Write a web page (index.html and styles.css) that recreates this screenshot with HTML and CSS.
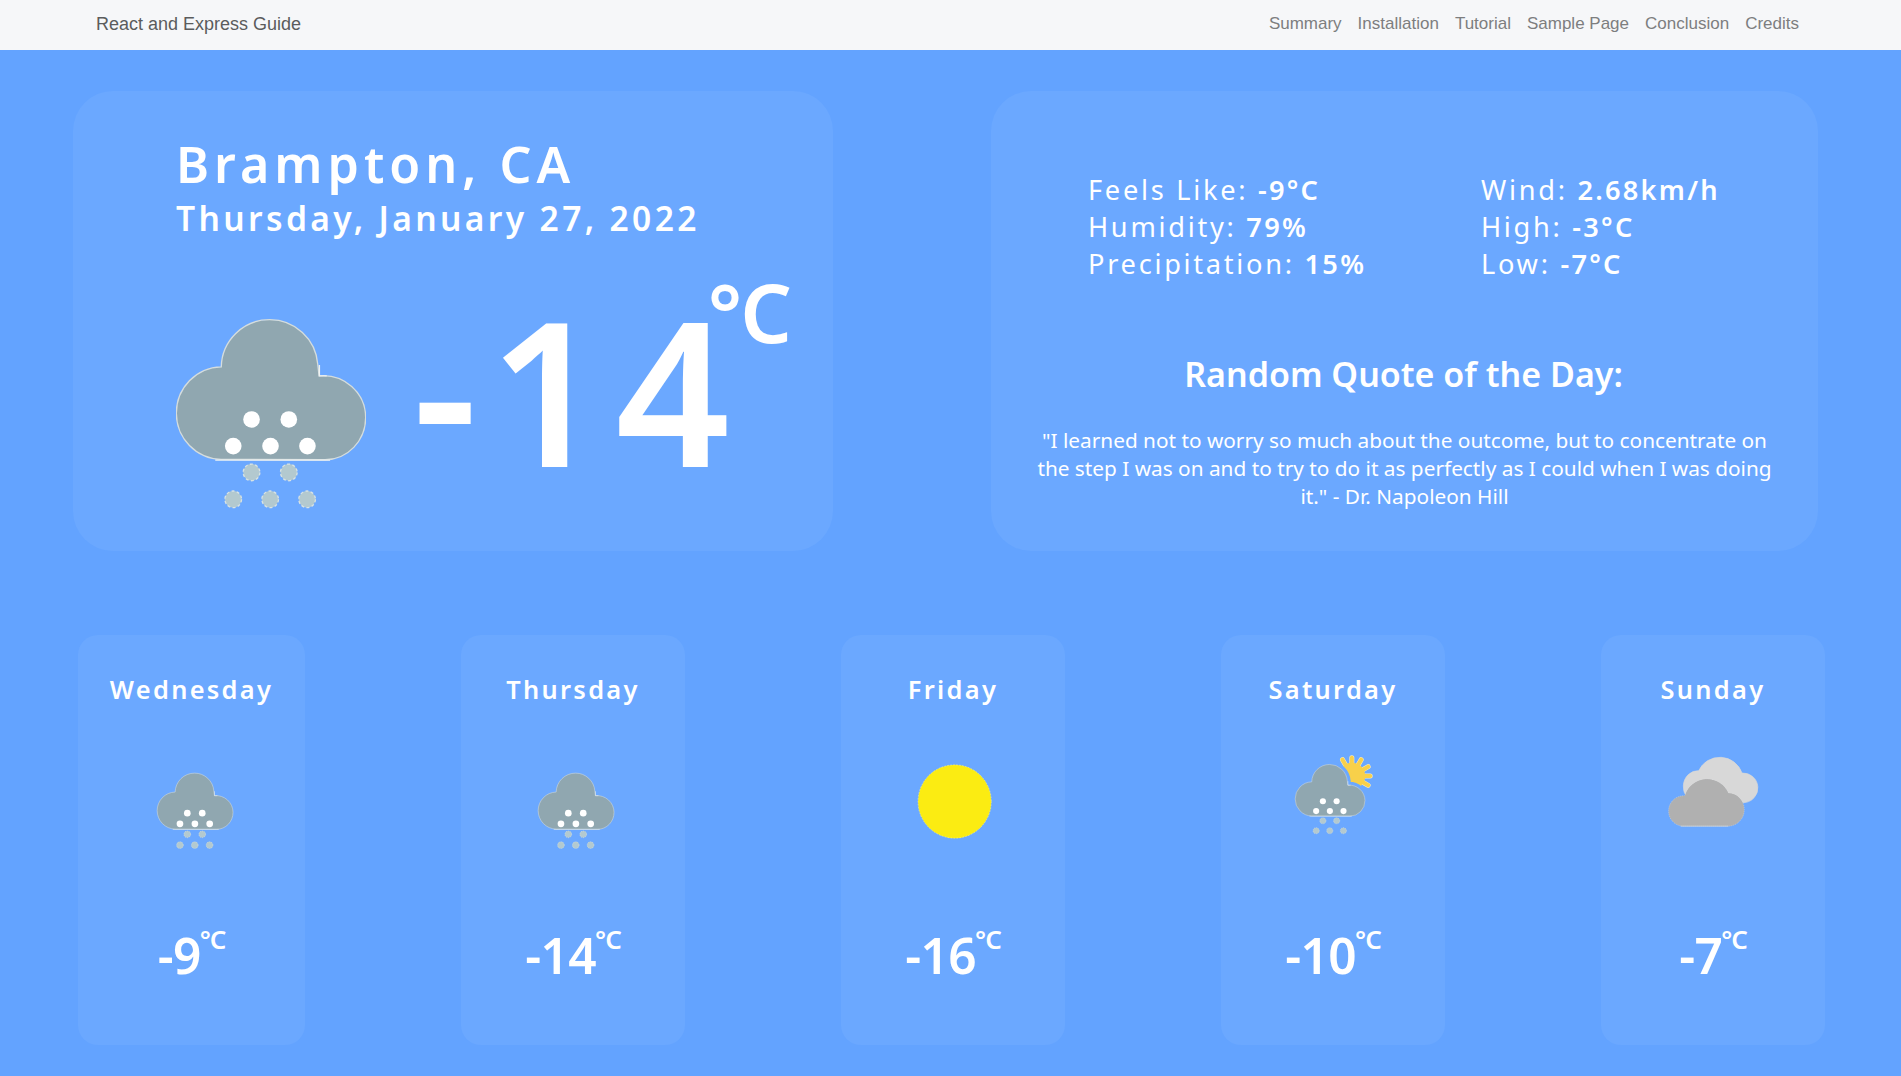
FILE: index.html
```html
<!DOCTYPE html>
<html lang="en">
<head>
<meta charset="utf-8">
<title>React and Express Guide</title>
<link rel="stylesheet" href="styles.css">
</head>
<body>
<svg class="defs" aria-hidden="true">
  <defs>
    <path id="cloud" d="M213 508A138 139 0 0 1 78 369A138 139 0 0 1 213 230A145 145 0 0 1 358 88A145 145 0 0 1 503 222L507 257A128 126 0 0 1 647 382A122 127 0 0 1 525 509Z"/>
    <g id="snow">
      <g fill="#fff"><circle cx="304" cy="388" r="25"/><circle cx="416" cy="388" r="25"/><circle cx="249" cy="468" r="25"/><circle cx="361" cy="468" r="25"/><circle cx="472" cy="468" r="25"/></g>
      <g fill="#b3c9cf" stroke="#d9e3e3" stroke-width="4" stroke-dasharray="9 7"><circle cx="304" cy="547" r="25"/><circle cx="416" cy="547" r="25"/><circle cx="249" cy="628" r="25"/><circle cx="360" cy="628" r="25"/><circle cx="471" cy="628" r="25"/></g>
    </g>
    <g id="snow-cloud">
      <use href="#cloud" fill="#90a7b0" stroke="#d5dddd" stroke-width="4"/>
      <path d="M195 510H540M508 224V257H530" fill="none" stroke="#eef2f2" stroke-width="4"/>
      <use href="#snow"/>
    </g>
    <mask id="behind-cloud" maskUnits="userSpaceOnUse" x="200" y="350" width="400" height="400">
      <rect x="200" y="350" width="400" height="400" fill="#fff"/>
      <g transform="translate(257.3 401) scale(.368)"><use href="#cloud" fill="#000" stroke="#000" stroke-width="54"/></g>
    </mask>
  </defs>
</svg>

<header class="navbar">
  <a class="brand">React and Express Guide</a>
  <nav class="links">
    <a>Summary</a><a>Installation</a><a>Tutorial</a><a>Sample Page</a><a>Conclusion</a><a>Credits</a>
  </nav>
</header>

<main class="weather">
  <div class="top">
    <section class="card current">
      <h1 class="city">Brampton, CA</h1>
      <h2 class="date">Thursday, January 27, 2022</h2>
      <div class="now">
        <svg class="now-icon" viewBox="77 86 571 571"><use href="#snow-cloud"/></svg>
        <span class="now-temp">-14</span><span class="now-unit">°C</span>
      </div>
    </section>
    <section class="card details">
      <div class="features">
        <p>Feels Like: <b>-9°C</b></p><p>Wind: <b>2.68km/h</b></p>
        <p>Humidity: <b>79%</b></p><p>High: <b>-3°C</b></p>
        <p>Precipitation: <b>15%</b></p><p>Low: <b>-7°C</b></p>
      </div>
      <h2 class="quote-title">Random Quote of the Day:</h2>
      <p class="quote">"I learned not to worry so much about the outcome, but to concentrate on the step I was on and to try to do it as perfectly as I could when I was doing it." - Dr. Napoleon Hill</p>
    </section>
  </div>

  <div class="forecast">
    <section class="day">
      <h3>Wednesday</h3>
      <svg class="icon" viewBox="203.5 357 384 384"><g transform="translate(259.8 424.2) scale(.4)"><use href="#snow-cloud"/></g></svg>
      <p class="temp">-9<span>°C</span></p>
    </section>
    <section class="day">
      <h3>Thursday</h3>
      <svg class="icon" viewBox="203.5 357 384 384"><g transform="translate(259.8 424.2) scale(.4)"><use href="#snow-cloud"/></g></svg>
      <p class="temp">-14<span>°C</span></p>
    </section>
    <section class="day">
      <h3>Friday</h3>
      <svg class="icon" viewBox="-3 -3 384 384"><circle cx="194" cy="184.500" r="110" fill="#fbec12" stroke="#fdf6a0" stroke-width="1.500" stroke-dasharray="5 4"/></svg>
      <p class="temp">-16<span>°C</span></p>
    </section>
    <section class="day">
      <h3>Saturday</h3>
      <svg class="icon" viewBox="207.5 357 384 384">
        <g mask="url(#behind-cloud)">
          <path d="M456 468L428 419M456 468V413M456 468L484 419M456 468L505 440M456 468H511M456 468L505 496" stroke="#fbeec0" stroke-width="15" stroke-linecap="round"/>
          <circle cx="456" cy="468" r="40" fill="#f8d04a"/>
          <path d="M456 468L428 419M456 468V413M456 468L484 419M456 468L505 440M456 468H511M456 468L505 496" stroke="#f8d04a" stroke-width="12" stroke-linecap="round"/>
        </g>
        <g transform="translate(257.3 401) scale(.368)"><use href="#snow-cloud"/></g>
      </svg>
      <p class="temp">-10<span>°C</span></p>
    </section>
    <section class="day">
      <h3>Sunday</h3>
      <svg class="icon" viewBox="208 358 384 384">
        <path d="M353 549A44 48 0 0 1 357 453A70 69 0 0 1 487 460A44 44 0 0 1 493 549Z" fill="#d8d8d8" stroke="#d8d8d8" stroke-width="2"/>
        <path d="M308 619.500A45 45.500 0 0 1 316 528.500A69 69 0 0 1 446 521A49 49 0 0 1 443 619.500Z" fill="#b0b0b0" stroke="#d6dade" stroke-width="1.500" stroke-dasharray="3 3"/>
        <path d="M312 528.500H316A69 69 0 0 1 446 521A45 45 0 0 1 491 560V575H308Z" fill="#b0b0b0"/>
        <path d="M303 619.500H446" stroke="#d9dce0" stroke-width="2"/>
      </svg>
      <p class="temp">-7<span>°C</span></p>
    </section>
  </div>
</main>
</body>
</html>
```
FILE: styles.css
```css
* { box-sizing: border-box; }

body {
  margin: 0;
  height: 1076px;
  overflow: hidden;
  background: #63a3ff;
  color: #fff;
  font-family: "Noto Sans", sans-serif;
}

h1, h2, h3, p { margin: 0; }

.defs { display: block; width: 0; height: 0; }

.navbar {
  display: flex;
  justify-content: space-between;
  align-items: baseline;
  height: 50px;
  padding: 14px 102px 0 96px;
  background: #f6f7f9;
  font-family: "Liberation Sans", Arial, sans-serif;
}

.brand { font-size: 18px; line-height: 21px; color: #5b5c5d; }

.links { display: flex; gap: 16px; font-size: 17px; color: #7d7e7f; position: relative; top: -1px; }

.top {
  display: flex;
  justify-content: space-between;
  padding: 41px 83px 0 73px;
}

.card {
  height: 460px;
  border-radius: 40px;
  background: #6ba8ff;
}

.current { width: 760px; padding: 41px 0 0 103px; }

.city { font-size: 50.200px; line-height: 64px; font-weight: 600; letter-spacing: .1em; }
.date { font-size: 33.600px; line-height: 44px; font-weight: 600; letter-spacing: .1em; }

.now { display: flex; align-items: flex-start; margin-top: 55px; }
.now-icon { width: 190px; height: 190px; margin-top: 24px; }
.now-temp { margin-left: 47px; font-size: 200px; line-height: 189px; font-weight: 600; letter-spacing: 12px; }
.now-unit { margin: -23px 0 0 -34px; font-size: 81px; line-height: 80px; font-weight: 600; letter-spacing: -2px; }

.details { width: 827px; padding: 80px 40px 0; text-align: center; }

.features {
  display: grid;
  grid-template-columns: 393px auto;
  padding-left: 57px;
  text-align: left;
  font-size: 27.200px;
  line-height: 37px;
  letter-spacing: .1em;
}
.features b { font-weight: 650; letter-spacing: .082em; }

.quote-title { margin: 69px 2px 0 0; font-size: 34px; line-height: 46px; font-weight: 600; }
.quote { margin-top: 29px; font-size: 20.800px; line-height: 28px; }

.forecast {
  display: flex;
  justify-content: space-between;
  padding: 84px 76px 0 78px;
}

.day {
  display: flex;
  flex-direction: column;
  align-items: center;
  width: 224px;
  height: 410px;
  padding-top: 37px;
  border-radius: 20px;
  background: #6ba8ff;
}
.day:first-child { width: 227px; }
.day h3 { font-size: 25.400px; line-height: 35px; font-weight: 600; letter-spacing: 2.300px; }

.icon { width: 128px; height: 128px; margin-top: 32px; }

.temp {
  display: flex;
  align-items: flex-start;
  margin-top: 54px;
  font-size: 49.600px;
  line-height: 68px;
  font-weight: 600;
  letter-spacing: -.600px;
}
.temp span { margin: 5px 0 0 -1px; font-size: 26px; line-height: 26px; letter-spacing: -1px; }
```
